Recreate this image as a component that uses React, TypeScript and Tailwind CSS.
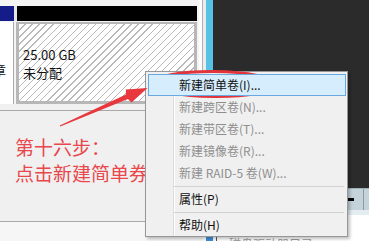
import React from "react";

const menuItems = [
  { label: "新建简单卷(I)...", active: true },
  { label: "新建跨区卷(N)...", disabled: true },
  { label: "新建带区卷(T)...", disabled: true },
  { label: "新建镜像卷(R)...", disabled: true },
  { label: "新建 RAID-5 卷(W)...", disabled: true },
];

const hatch =
  "bg-[image:repeating-linear-gradient(135deg,#ffffff_0px,#ffffff_4px,#b9b9b9_4px,#b9b9b9_5px)]";

const MenuRow = ({ label, active, disabled }: { label: string; active?: boolean; disabled?: boolean }) =>
  active ? (
    <div className="relative z-10 ml-[2px] mr-[1px] flex h-[22px] items-center border border-[#6aa9df] bg-[#d6edfd] pl-[30px] text-[#111]">
      {label}
    </div>
  ) : (
    <div className={`relative z-10 flex h-[22px] items-center pl-[33px] ${disabled ? "text-[#8e8e8e]" : "text-[#111]"}`}>
      {label}
    </div>
  );

const Separator = () => (
  <div className="relative z-10 flex h-[4px] flex-col justify-center pl-[28px] pr-[3px]">
    <div className="h-px bg-[#d2d2d2]" />
  </div>
);

const ContextMenu = () => (
  <div className="absolute left-[145px] top-[71px] h-[166px] w-[203px] border border-[#979797] bg-[#f0f0f0] pt-[2px] text-[12px] shadow-[2px_2px_3px_rgba(0,0,0,0.25)]">
    <div className="absolute bottom-0 left-[27px] top-0 w-px bg-[#dcdcdc]" />
    <div className="absolute bottom-0 left-[28px] top-0 w-px bg-white" />
    {menuItems.map((item, idx) => (
      <MenuRow key={idx} {...item} />
    ))}
    <Separator />
    <MenuRow label="属性(P)" />
    <Separator />
    <MenuRow label="帮助(H)" />
  </div>
);

export default function App() {
  return (
    <div className="relative h-[241px] w-[369px] overflow-hidden bg-[#f0f0f0] font-['Noto_Sans_CJK_SC',sans-serif]">
      <div className="flex h-[215px]">
        {/* disk management pane */}
        <div className="flex w-[213px] flex-col">
          <div className="flex h-[104px]">
            <div className="flex w-[197px] flex-col bg-[#f4f4f4]">
              <div className="h-[6px]" />
              <div className="flex h-[15px]">
                <div className="w-[14px] bg-[#141c8a]" />
                <div className="w-[3px] bg-[#e6e6e6]" />
                <div className="flex-1 bg-black" />
              </div>
              <div className="flex flex-1 pt-[1px]">
                <div className="w-[14px] overflow-hidden border-r border-[#a8a8a8] bg-white pt-[40px] text-[13px] leading-[16px] text-[#111]">
                  <span className="-ml-[7px] block">章</span>
                </div>
                <div className="w-[2px]" />
                <div className={`flex-1 border-[3px] border-t-[2px] border-[#b7b7b7] ${hatch} pl-[4px] pt-[22px] text-[13px] leading-[18px] text-[#111]`}>
                  <div>25.00 GB</div>
                  <div>未分配</div>
                </div>
              </div>
            </div>
            <div className="flex w-[16px]">
              <div className="w-[2px] bg-[#f4f4f4]" />
              <div className="w-[3px] bg-white" />
              <div className="w-px bg-[#b0b0b0]" />
              <div className="w-[3px] bg-[#ececec]" />
              <div className="w-[7px] bg-[#58c1e6]" />
            </div>
          </div>
          <div className="h-[6px]" />
          <div className="flex-1 border-t border-[#a9a9a9] pl-[15px] pt-[23px] text-[19px] leading-[26px] text-[#e8474c]">
            <div>第十六步：</div>
            <div>点击新建简单券</div>
          </div>
        </div>
        {/* right dark area */}
        <div className="flex flex-1 flex-col">
          <div className="h-[188px] bg-[#2b2b2b]" />
          <div className="flex h-[22px] items-center border-t border-[#9fb0b8] bg-[#c4d3da] pl-[135px]">
            <div className="h-[3px] w-[6px] bg-black" />
            <div className="ml-[9px] h-full w-px bg-[#8c9ba2]" />
          </div>
          <div className="h-[5px] bg-[#e3edf2]" />
        </div>
      </div>
      <div className="flex h-[26px]">
        <div className="flex w-[203px] flex-col">
          <div className="h-[6px] bg-[#f0f0f0]" />
          <div className="flex-1 border-t border-[#a9a9a9] bg-[#f6f6f6]" />
        </div>
        <div className="flex flex-1 items-start bg-white pl-[3px] pt-[22px]">
          <div className="h-[6px] w-[7px] bg-[#3c8fd8]" />
          <div className="ml-[3px] h-[6px] w-px bg-[#555]" />
          <div className="ml-[12px] text-[12px] leading-[14px] text-[#9a9a9a]">磁盘驱动器目录</div>
        </div>
      </div>

      <ContextMenu />

      <svg className="pointer-events-none absolute inset-0" width="369" height="241" viewBox="0 0 369 241">
        <ellipse cx="214" cy="84" rx="61" ry="12.5" fill="none" stroke="#e2353b" strokeWidth="3" transform="rotate(0.5 214 84)" />
        <polygon
          points="59.8,125.5 125.9,94.5 125.9,89.6 147.5,88 131.5,102.4 127.9,99.1 60.2,126.5"
          fill="#e8383d"
        />
      </svg>
    </div>
  );
}
